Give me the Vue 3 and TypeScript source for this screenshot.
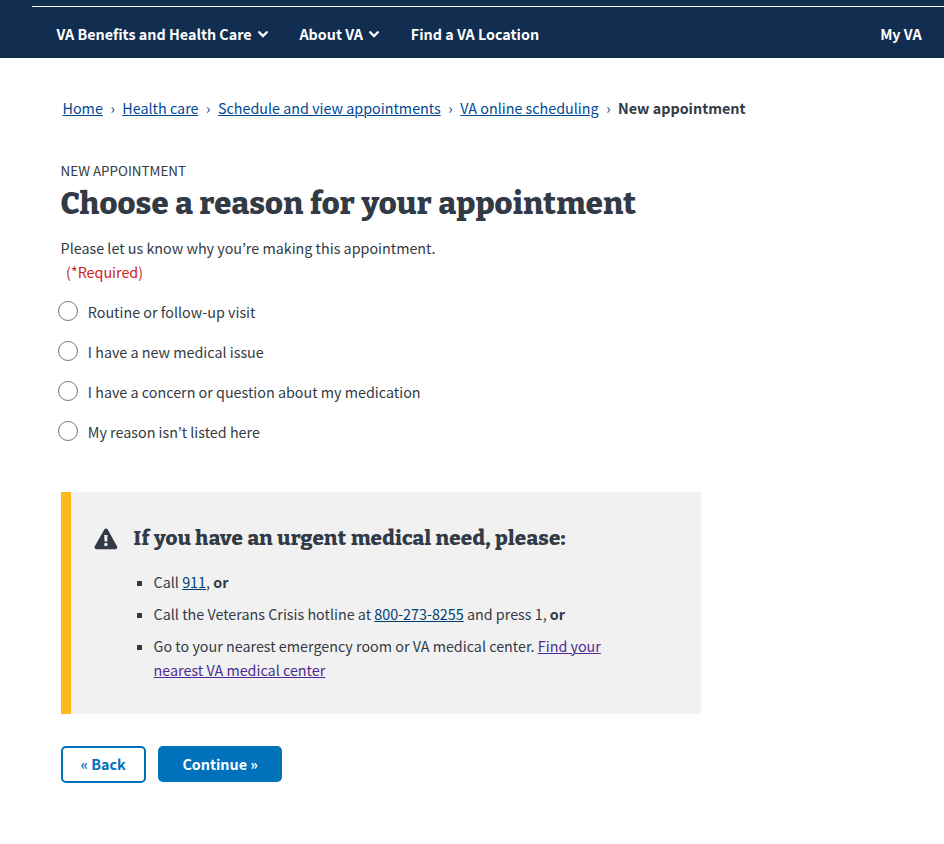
<script setup lang="ts">
import { ref } from 'vue'

interface NavItem {
  label: string
  menu: boolean
}

const navItems: NavItem[] = [
  { label: 'VA Benefits and Health Care', menu: true },
  { label: 'About VA', menu: true },
  { label: 'Find a VA Location', menu: false },
]

const crumbs: string[] = ['Home', 'Health care', 'Schedule and view appointments', 'VA online scheduling']

const reasons: string[] = [
  'Routine or follow-up visit',
  'I have a new medical issue',
  'I have a concern or question about my medication',
  'My reason isn’t listed here',
]

const selected = ref<string>('')
</script>

<template>
  <div class="page">
    <header class="header">
      <nav class="nav">
        <a v-for="item in navItems" :key="item.label" class="nav-item" href="#">
          <span>{{ item.label }}</span>
          <svg v-if="item.menu" class="chevron" viewBox="0 0 10 7" width="10" height="7">
            <path d="M1.2 1.3 5 5.1 8.8 1.3" fill="none" stroke="#fff" stroke-width="2.3" stroke-linecap="round" stroke-linejoin="miter" />
          </svg>
        </a>
        <a class="nav-item nav-last" href="#">My VA</a>
      </nav>
    </header>

    <nav class="breadcrumbs">
      <template v-for="crumb in crumbs" :key="crumb">
        <a href="#">{{ crumb }}</a>
        <span class="separator">›</span>
      </template>
      <strong>New appointment</strong>
    </nav>

    <main class="content">
      <p class="eyebrow">NEW APPOINTMENT</p>
      <h1>Choose a reason for your appointment</h1>

      <fieldset class="reasons">
        <legend>
          Please let us know why you’re making this appointment.
          <span class="required">(*Required)</span>
        </legend>
        <label v-for="reason in reasons" :key="reason" class="reason">
          <input v-model="selected" type="radio" name="reason" :value="reason" />
          <span>{{ reason }}</span>
        </label>
      </fieldset>

      <section class="alert">
        <svg class="alert-icon" viewBox="0 0 24 22" width="24" height="22">
          <path
            fill="#323a45"
            fill-rule="evenodd"
            d="M10.3 1.5a2 2 0 0 1 3.4 0l9.3 16.7a2 2 0 0 1-1.7 3H2.5a2 2 0 0 1-1.7-3zM10.2 7l.35 6.6h2.7L13.6 7zM11.9 14.7a1.8 1.8 0 1 0 0 3.6 1.8 1.8 0 0 0 0-3.6z"
          />
        </svg>
        <div class="alert-body">
          <h2>If you have an urgent medical need, please:</h2>
          <ul>
            <li>Call <a href="#">911</a>, <b>or</b></li>
            <li>Call the Veterans Crisis hotline at <a href="#">800-273-8255</a> and press 1, <b>or</b></li>
            <li>
              Go to your nearest emergency room or VA medical center.
              <a class="visited" href="#">Find your<br />nearest VA medical center</a>
            </li>
          </ul>
        </div>
      </section>

      <div class="actions">
        <button class="button secondary" type="button">« Back</button>
        <button class="button primary" type="button">Continue »</button>
      </div>
    </main>
  </div>
</template>

<style>
body {
  background: #fff;
}
</style>

<style scoped>
.page {
  height: 844px;
  overflow: hidden;
  color: #323a45;
  font-family: 'Source Sans Pro', 'Noto Sans CJK KR', 'Open Sans', sans-serif;
  font-size: 14.33px;
  line-height: 24px;
}

.header {
  box-sizing: border-box;
  height: 58px;
  padding: 6px 0 0 32px;
  background: #112e51;
}

.nav {
  display: flex;
  align-items: center;
  height: 51px;
  padding: 4px 22.4px 0 24.4px;
  box-sizing: border-box;
  border-top: 1px solid #fff;
}

.nav-item {
  display: flex;
  align-items: center;
  gap: 6.4px;
  margin-right: 31.4px;
  color: #fff;
  font-weight: 700;
  text-decoration: none;
  white-space: nowrap;
}

.nav-last {
  margin: 0 0 0 auto;
}

.breadcrumbs {
  display: flex;
  padding: 38px 0 0 62.5px;
  white-space: nowrap;
}

.breadcrumbs a {
  color: #004795;
}

.separator {
  width: 19.5px;
  color: #004795;
  text-align: center;
}

.content {
  padding: 41px 0 0 60.6px;
}

.eyebrow {
  margin: 0;
  font-size: 13.4px;
  line-height: 18px;
}

h1,
h2 {
  margin: 0;
  font-family: Bitter, 'DejaVu Serif', serif;
  font-weight: 800;
  white-space: nowrap;
}

h1 {
  padding-top: 4px;
  font-size: 31px;
  letter-spacing: 0.14px;
  word-spacing: 1.2px;
  line-height: 42px;
}

.reasons {
  margin: 0;
  padding: 17px 0 0;
  border: 0;
}

legend {
  padding: 11px 0 0;
  white-space: nowrap;
}

.required {
  display: block;
  padding-left: 5.5px;
  color: #cd2026;
}

.reason {
  display: flex;
  gap: 10.2px;
  height: 40px;
  margin-left: -3px;
}

.reason span {
  margin-top: -1px;
}

.reason input {
  box-sizing: border-box;
  width: 20px;
  height: 20px;
  margin: 0;
  border: 1px solid #757575;
  border-radius: 50%;
  background: #fff;
  appearance: none;
}

.reason input:checked {
  background: #0071bb;
  box-shadow: inset 0 0 0 3px #fff;
}

.alert {
  display: flex;
  box-sizing: border-box;
  width: 640px;
  height: 222px;
  margin-top: 31px;
  padding: 30px 20px 0 23px;
  border-left: 10px solid #fdb81e;
  background: #f1f1f1;
}

.alert-icon {
  flex: none;
  margin-top: 6px;
}

.alert-body {
  padding-left: 16px;
}

h2 {
  padding-top: 1px;
  font-size: 20.6px;
  letter-spacing: 0.26px;
  word-spacing: 0.5px;
  line-height: 30px;
}

ul {
  margin: 17px 0 0;
  padding: 0;
  list-style: none;
}

li {
  position: relative;
  margin-bottom: 8px;
  padding-left: 20px;
  white-space: nowrap;
}

li::before {
  content: '';
  position: absolute;
  top: 11px;
  left: 3px;
  width: 5px;
  height: 5px;
  background: #323a45;
}

li a {
  color: #003e73;
}

li a.visited {
  color: #4c2c92;
}

a {
  text-underline-offset: 1px;
  text-decoration-thickness: 1px;
}

.actions {
  display: flex;
  align-items: flex-start;
  gap: 12px;
  margin-top: 32px;
}

.button {
  box-sizing: border-box;
  height: 36px;
  padding: 0;
  border: 0;
  border-radius: 5px;
  font: inherit;
  font-weight: 700;
}

.secondary {
  width: 85px;
  height: 37px;
  padding-bottom: 1px;
  border: 2px solid #0071bb;
  background: #fff;
  color: #0071bb;
}

.primary {
  width: 124px;
  padding-left: 1px;
  background: #0071bb;
  color: #fff;
}
</style>
